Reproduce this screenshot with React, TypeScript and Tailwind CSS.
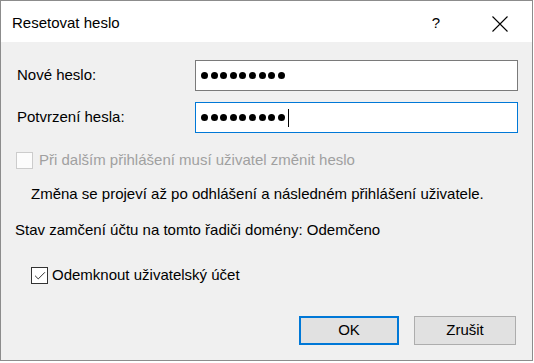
import { Check } from 'lucide-react'

const font = { fontFamily: '"Liberation Sans", Arial, sans-serif' }

function Dots({ count, caret }: { count: number; caret?: boolean }) {
    return (
        <div className="flex items-center gap-[2.6px] pl-[5px]">
            {Array.from({ length: count }).map((_, i) => (
                <span key={i} className="block w-[7px] h-[7px] rounded-full bg-black" />
            ))}
            {caret && <span className="block w-px h-[18px] bg-black ml-[1px]" />}
        </div>
    )
}

function PasswordRow({
    label,
    count,
    focused,
}: {
    label: string
    count: number
    focused?: boolean
}) {
    return (
        <div className="flex items-center h-[31px]">
            <span className="w-[194px] pl-[16px] text-[15px] text-black">{label}</span>
            <div
                className={
                    focused
                        ? 'w-[323px] h-[31px] flex items-center bg-white border border-[#0078d7]'
                        : 'w-[323px] h-[31px] flex items-center bg-white border border-[#7a7a7a]'
                }
            >
                <Dots count={count} caret={focused} />
            </div>
        </div>
    )
}

export default function App() {
    return (
        <div className="w-[534px] h-[363px] bg-white" style={font}>
            <div className="w-[533px] h-[361px] border border-[#8c8c8c] bg-[#f0f0f0] flex flex-col">
                {/* Title bar */}
                <div className="h-[41px] bg-white flex items-center pl-[11px] shrink-0">
                    <span className="text-[15px] text-black flex-1 pt-[4px]">Resetovat heslo</span>
                    <span className="text-[15px] text-black w-[20px] text-center pt-[4px] mr-[46px]">?</span>
                    <svg width="16" height="16" viewBox="0 0 16 16" className="mr-[24px] mt-[4px]">
                        <path d="M0.5 0.5 L15.5 15.5 M15.5 0.5 L0.5 15.5" stroke="#000" strokeWidth="1.1" />
                    </svg>
                </div>

                {/* Body */}
                <div className="flex flex-col pt-[18px]">
                    <PasswordRow label="Nové heslo:" count={9} />
                    <div className="mt-[11px]">
                        <PasswordRow label="Potvrzení hesla:" count={9} focused />
                    </div>

                    <div className="flex items-center mt-[19px] pl-[15px] h-[17px]">
                        <span className="block w-[17px] h-[17px] border border-[#cccccc] bg-[#fcfcfc]" />
                        <span className="ml-[6px] text-[15px] text-[#a0a0a0]">
                            Při dalším přihlášení musí uživatel změnit heslo
                        </span>
                    </div>

                    <div className="mt-[15px] pl-[30px] h-[20px] flex items-center text-[15px] text-black">
                        Změna se projeví až po odhlášení a následném přihlášení uživatele.
                    </div>

                    <div className="mt-[16px] pl-[14px] h-[20px] flex items-center text-[15px] text-black">
                        Stav zamčení účtu na tomto řadiči domény: Odemčeno
                    </div>

                    <div className="flex items-center mt-[27px] pl-[30px] h-[17px]">
                        <span className="flex items-center justify-center w-[17px] h-[17px] border border-[#333333] bg-white">
                            <Check size={14} strokeWidth={1.6} color="#222" />
                        </span>
                        <span className="ml-[4px] text-[15px] text-black">Odemknout uživatelský účet</span>
                    </div>

                    <div className="flex justify-end gap-[15px] mt-[32px] pr-[16px]">
                        <button className="w-[100px] h-[29px] bg-[#e1e1e1] border-2 border-[#0078d7] text-[15px] text-black">
                            OK
                        </button>
                        <button className="w-[102px] h-[29px] bg-[#e1e1e1] border border-[#adadad] text-[15px] text-black">
                            Zrušit
                        </button>
                    </div>
                </div>
            </div>
        </div>
    )
}
